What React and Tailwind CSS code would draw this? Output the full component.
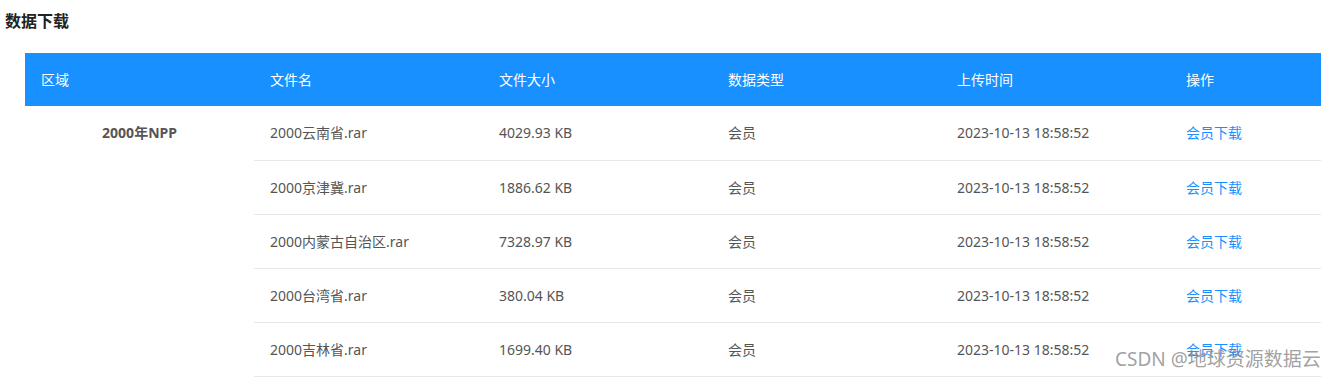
import React from "react";

const rows = [
  ["2000云南省.rar", "4029.93 KB"],
  ["2000京津冀.rar", "1886.62 KB"],
  ["2000内蒙古自治区.rar", "7328.97 KB"],
  ["2000台湾省.rar", "380.04 KB"],
  ["2000吉林省.rar", "1699.40 KB"],
];

const font = { fontFamily: '"Noto Sans", "Noto Sans CJK SC", sans-serif' };

export default function App() {
  return (
    <div className="relative w-[1340px] h-[379px] bg-white overflow-hidden" style={font}>
      <div className="h-[53px] pl-[5px] pt-[9px] text-[16px] font-bold text-[#222] leading-[24px]">数据下载</div>
      <table className="ml-[25px] border-collapse text-[14px] table-fixed w-[1296px]">
        <colgroup>
          <col className="w-[229px]" />
          <col className="w-[229px]" />
          <col className="w-[229px]" />
          <col className="w-[229px]" />
          <col className="w-[229px]" />
          <col className="w-[151px]" />
        </colgroup>
        <thead>
          <tr className="bg-[#1890ff] text-white h-[53px]">
            {["区域", "文件名", "文件大小", "数据类型", "上传时间", "操作"].map((h) => (
              <th key={h} className="text-left font-normal pl-4 rounded-none">{h}</th>
            ))}
          </tr>
        </thead>
        <tbody className="text-[#555]">
          {rows.map((r, i) => (
            <tr key={i} className="h-[54px]">
              {i === 0 && (
                <td rowSpan={5} className="align-top text-center font-bold pt-[17px] leading-[20px]">2000年NPP</td>
              )}
              <td className="pl-4 border-b border-[#e8e8e8]">{r[0]}</td>
              <td className="pl-4 border-b border-[#e8e8e8]">{r[1]}</td>
              <td className="pl-4 border-b border-[#e8e8e8]">会员</td>
              <td className="pl-4 border-b border-[#e8e8e8]">2023-10-13 18:58:52</td>
              <td className="pl-4 border-b border-[#e8e8e8] text-[#1890ff]">会员下载</td>
            </tr>
          ))}
        </tbody>
      </table>
      <div className="absolute left-[1115px] top-[346px] text-[19px] text-[#888]/80 leading-[26px] whitespace-nowrap">CSDN @地球资源数据云</div>
    </div>
  );
}
